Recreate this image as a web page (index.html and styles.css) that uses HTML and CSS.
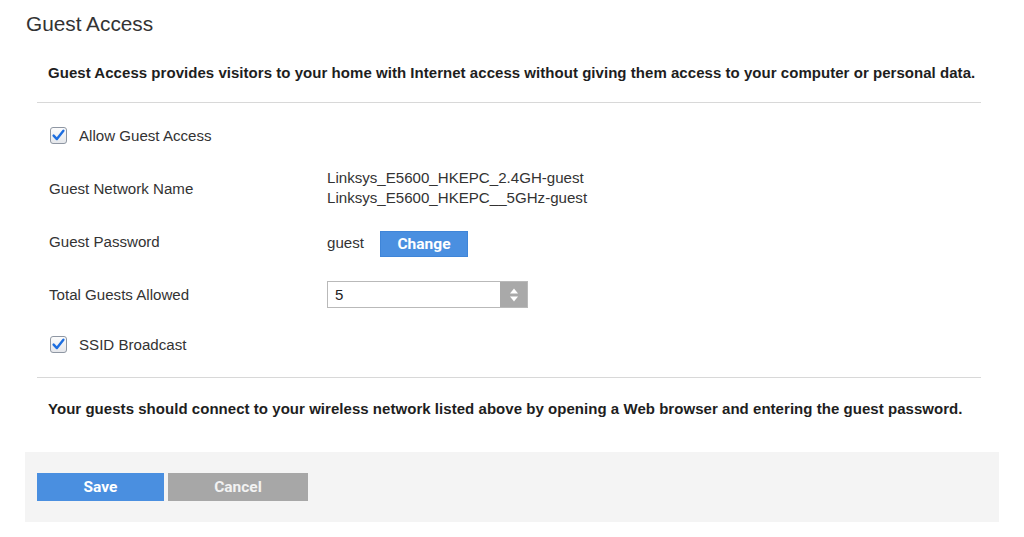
FILE: index.html
```html
<!DOCTYPE html>
<html>
<head>
<meta charset="utf-8">
<link rel="stylesheet" href="styles.css">
</head>
<body>
<div class="page">
  <h1 class="title">Guest Access</h1>
  <div class="content">
    <p class="intro">Guest Access provides visitors to your home with Internet access without giving them access to your computer or personal data.</p>
    <div class="rule"></div>
    <div class="rows">
      <div class="row row-allow">
        <span class="check">
          <svg width="17" height="17" viewBox="0 0 17 17"><defs><linearGradient id="g1" x1="0" y1="0" x2="0" y2="1"><stop offset="0" stop-color="#fdfdfd"/><stop offset="1" stop-color="#e4e6ea"/></linearGradient></defs><rect x="0.5" y="0.5" width="16" height="16" rx="2.5" fill="url(#g1)" stroke="#8f97a3"/><path d="M3.6 8.6 L6.9 12.1 L13.4 3.8" fill="none" stroke="#1d6ee0" stroke-width="2.4" stroke-linecap="round" stroke-linejoin="round"/></svg>
        </span>
        <span class="check-label">Allow Guest Access</span>
      </div>
      <div class="row row-name">
        <span class="label">Guest Network Name</span>
        <div class="value names"><div>Linksys_E5600_HKEPC_2.4GH-guest</div><div>Linksys_E5600_HKEPC__5GHz-guest</div></div>
      </div>
      <div class="row row-pass">
        <span class="label label-pass">Guest Password</span>
        <div class="value pass"><span>guest</span><button class="btn btn-change">Change</button></div>
      </div>
      <div class="row row-total">
        <span class="label">Total Guests Allowed</span>
        <div class="value">
          <div class="spin">
            <span class="spin-val">5</span>
            <span class="spin-btn">
              <svg width="10" height="16" viewBox="0 0 10 16"><path d="M5 1.5 L9 6.5 L1 6.5 Z" fill="#fff"/><path d="M5 14.5 L9 9.5 L1 9.5 Z" fill="#fff"/></svg>
            </span>
          </div>
        </div>
      </div>
      <div class="row row-ssid">
        <span class="check">
          <svg width="17" height="17" viewBox="0 0 17 17"><defs><linearGradient id="g2" x1="0" y1="0" x2="0" y2="1"><stop offset="0" stop-color="#fdfdfd"/><stop offset="1" stop-color="#e4e6ea"/></linearGradient></defs><rect x="0.5" y="0.5" width="16" height="16" rx="2.5" fill="url(#g2)" stroke="#8f97a3"/><path d="M3.6 8.6 L6.9 12.1 L13.4 3.8" fill="none" stroke="#1d6ee0" stroke-width="2.4" stroke-linecap="round" stroke-linejoin="round"/></svg>
        </span>
        <span class="check-label">SSID Broadcast</span>
      </div>
    </div>
    <div class="rule"></div>
    <p class="outro">Your guests should connect to your wireless network listed above by opening a Web browser and entering the guest password.</p>
  </div>
  <div class="footer">
    <button class="btn btn-save">Save</button>
    <button class="btn btn-cancel">Cancel</button>
  </div>
</div>
</body>
</html>
```

FILE: styles.css
```css
* { box-sizing: border-box; }
html, body { margin: 0; padding: 0; background: #fff; }
body { font-family: "Liberation Sans", Arial, sans-serif; color: #333; }

.page { width: 974px; margin-left: 25px; }

.title {
  margin: 0;
  padding-top: 12px;
  padding-left: 1px;
  font-size: 20.8px;
  line-height: 24px;
  font-weight: normal;
  color: #333;
}

.content { padding: 0 18px 0 12px; }

.intro, .outro {
  margin: 0;
  padding-left: 11px;
  font-size: 15px;
  line-height: 20px;
  font-weight: bold;
  letter-spacing: 0.04px;
  color: #1e1e1e;
  white-space: nowrap;
}
.intro { margin-top: 27px; margin-bottom: 19px; }
.outro { margin-top: 21px; margin-bottom: 33px; }

.rule { height: 1px; background: #d8d8d8; }

.rows { display: flex; flex-direction: column; padding-left: 12px; }

.row { display: flex; align-items: center; font-size: 15.1px; color: #333; }
.row-allow { margin-top: 17px; height: 30px; }
.row-name { margin-top: 18px; height: 40px; }
.row-pass { margin-top: 23px; height: 26px; }
.row-total { margin-top: 24px; height: 27px; }
.row-ssid { margin-top: 21px; height: 30px; margin-bottom: 18px; }

.check { width: 17px; height: 17px; margin-left: 1px; display: flex; }
.check svg { display: block; }
.check-label { margin-left: 12px; }

.label { width: 278px; flex: none; }
.label-pass { position: relative; top: -3px; }
.value { display: flex; align-items: center; }
.names { flex-direction: column; align-items: flex-start; line-height: 20px; }
.pass span { width: 53px; position: relative; top: -2px; }

.btn {
  border: none;
  color: #fff;
  font-family: Roboto, "Liberation Sans", Arial, sans-serif;
  font-weight: bold;
  font-size: 15.5px;
  padding: 0;
  margin: 0;
  cursor: pointer;
}
.btn-change { width: 88px; height: 26px; background: #4a8fe0; border: 1px solid #3f85d8; }

.spin {
  width: 201px;
  height: 27px;
  border: 1px solid #b9b9b9;
  display: flex;
  align-items: center;
  justify-content: space-between;
  background: #fff;
}
.spin-val { padding-left: 7px; font-size: 15px; color: #222; }
.spin-btn {
  width: 27px;
  height: 25px;
  background: #a9a9a9;
  display: flex;
  align-items: center;
  justify-content: center;
}
.spin-btn svg { display: block; }

.footer {
  background: #f4f4f4;
  height: 70px;
  padding: 21px 12px 0;
  display: flex;
  align-items: flex-start;
  gap: 4px;
}
.btn-save { width: 127px; height: 28px; background: #4a8fe0; }
.btn-cancel { width: 140px; height: 28px; background: #a7a7a7; color: #f2f2f2; }
```
